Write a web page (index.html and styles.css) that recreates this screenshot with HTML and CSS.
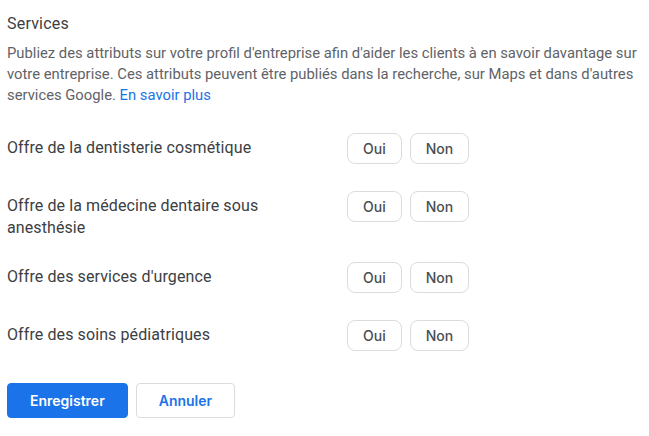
FILE: index.html
```html
<!DOCTYPE html>
<html lang="fr">
<head>
    <meta charset="UTF-8">
    <meta name="viewport" content="width=device-width, initial-scale=1.0">
    <title>Services</title>
    <link rel="stylesheet" href="styles.css">
</head>
<body>
    <div class="panel">
        <h2 class="title">Services</h2>
        <p class="intro">Publiez des attributs sur votre profil d'entreprise afin d'aider les clients à en savoir davantage sur votre entreprise. Ces attributs peuvent être publiés dans la recherche, sur Maps et dans d'autres services Google. <a href="#" class="link">En savoir plus</a></p>

        <div class="attributes">
            <div class="attr-row">
                <div class="attr-label">Offre de la dentisterie cosmétique</div>
                <div class="choice">
                    <button class="choice-btn">Oui</button>
                    <button class="choice-btn">Non</button>
                </div>
            </div>
            <div class="attr-row">
                <div class="attr-label">Offre de la médecine dentaire sous anesthésie</div>
                <div class="choice">
                    <button class="choice-btn">Oui</button>
                    <button class="choice-btn">Non</button>
                </div>
            </div>
            <div class="attr-row">
                <div class="attr-label">Offre des services d'urgence</div>
                <div class="choice">
                    <button class="choice-btn">Oui</button>
                    <button class="choice-btn">Non</button>
                </div>
            </div>
            <div class="attr-row">
                <div class="attr-label">Offre des soins pédiatriques</div>
                <div class="choice">
                    <button class="choice-btn">Oui</button>
                    <button class="choice-btn">Non</button>
                </div>
            </div>
        </div>

        <div class="actions">
            <button class="btn btn-primary">Enregistrer</button>
            <button class="btn btn-secondary">Annuler</button>
        </div>
    </div>
</body>
</html>
```

FILE: styles.css
```css
body {
    margin: 0;
    font-family: Roboto, "Liberation Sans", sans-serif;
    background: #fff;
    color: #3c4043;
}
.panel {
    padding: 12px 7px 0 7px;
}
.title {
    margin: 0;
    font-size: 16px;
    font-weight: 400;
    line-height: 24px;
    letter-spacing: 0.2px;
    color: #3c4043;
}
.intro {
    margin: 7px 0 0 0;
    font-size: 14.8px;
    line-height: 21px;
    color: #5f6368;
}
.link {
    color: #1a73e8;
    text-decoration: none;
}
.attributes {
    margin-top: 27px;
}
.attr-row {
    display: flex;
    align-items: flex-start;
    min-height: 58px;
    padding-bottom: 19px;
    box-sizing: border-box;
}
.attr-label {
    flex: 0 0 300px;
    margin-right: 40px;
    padding: 4px 0;
    font-size: 16px;
    line-height: 22px;
    letter-spacing: 0.1px;
    color: #3c4043;
}
.choice {
    display: flex;
    gap: 8px;
}
.choice-btn {
    height: 31px;
    padding: 0 15px;
    border: 1px solid #dadce0;
    border-radius: 8px;
    background: #fff;
    font-family: Inter, Roboto, sans-serif;
    font-size: 14px;
    font-weight: 500;
    color: #4a4e52;
}
.actions {
    display: flex;
    gap: 8px;
    margin-top: 5px;
}
.btn {
    height: 35px;
    padding: 0 22px;
    border-radius: 4px;
    font-family: Inter, Roboto, sans-serif;
    font-size: 14px;
    font-weight: 600;
}
.btn-primary {
    background: #1a73e8;
    border: 1px solid #1a73e8;
    color: #fff;
}
.btn-secondary {
    background: #fff;
    border: 1px solid #dadce0;
    color: #1a73e8;
}
```
